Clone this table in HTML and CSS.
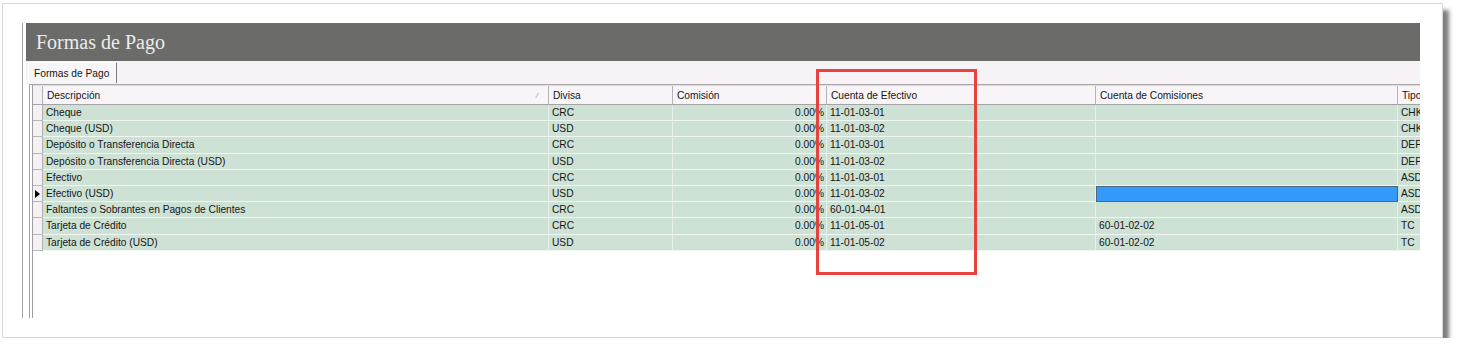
FILE: index.html
```html
<!DOCTYPE html>
<html lang="es">
<head>
<meta charset="utf-8">
<title>Formas de Pago</title>
<link rel="stylesheet" href="styles.css">
</head>
<body>
<div class="card">
  <div class="panel">
    <div class="titlebar">Formas de Pago</div>
    <div class="tabstrip"><div class="tab">Formas de Pago</div></div>
    <div class="gridwrap">
      <div class="grid">
        <div class="row head">
          <div class="ind"></div>
          <div class="hc desc"><span>Descripción</span><span class="sort">/</span></div>
          <div class="hc">Divisa</div>
          <div class="hc">Comisión</div>
          <div class="hc">Cuenta de Efectivo</div>
          <div class="hc">Cuenta de Comisiones</div>
          <div class="hc">Tipo</div>
        </div>
        <div class="row">
          <div class="ind"></div>
          <div class="c">Cheque</div><div class="c">CRC</div><div class="c num">0.00%</div><div class="c">11-01-03-01</div><div class="c"></div><div class="c">CHK</div>
        </div>
        <div class="row">
          <div class="ind"></div>
          <div class="c">Cheque (USD)</div><div class="c">USD</div><div class="c num">0.00%</div><div class="c">11-01-03-02</div><div class="c"></div><div class="c">CHK</div>
        </div>
        <div class="row">
          <div class="ind"></div>
          <div class="c">Depósito o Transferencia Directa</div><div class="c">CRC</div><div class="c num">0.00%</div><div class="c">11-01-03-01</div><div class="c"></div><div class="c">DEP</div>
        </div>
        <div class="row">
          <div class="ind"></div>
          <div class="c">Depósito o Transferencia Directa (USD)</div><div class="c">USD</div><div class="c num">0.00%</div><div class="c">11-01-03-02</div><div class="c"></div><div class="c">DEP</div>
        </div>
        <div class="row">
          <div class="ind"></div>
          <div class="c">Efectivo</div><div class="c">CRC</div><div class="c num">0.00%</div><div class="c">11-01-03-01</div><div class="c"></div><div class="c">ASD</div>
        </div>
        <div class="row">
          <div class="ind current"><svg width="5" height="8" viewBox="0 0 5 8"><polygon points="0,0 5,4 0,8" fill="#000"/></svg></div>
          <div class="c">Efectivo (USD)</div><div class="c">USD</div><div class="c num">0.00%</div><div class="c">11-01-03-02</div><div class="c selected"></div><div class="c">ASD</div>
        </div>
        <div class="row">
          <div class="ind"></div>
          <div class="c">Faltantes o Sobrantes en Pagos de Clientes</div><div class="c">CRC</div><div class="c num">0.00%</div><div class="c">60-01-04-01</div><div class="c"></div><div class="c">ASD</div>
        </div>
        <div class="row">
          <div class="ind"></div>
          <div class="c">Tarjeta de Crédito</div><div class="c">CRC</div><div class="c num">0.00%</div><div class="c">11-01-05-01</div><div class="c">60-01-02-02</div><div class="c">TC</div>
        </div>
        <div class="row">
          <div class="ind"></div>
          <div class="c">Tarjeta de Crédito (USD)</div><div class="c">USD</div><div class="c num">0.00%</div><div class="c">11-01-05-02</div><div class="c">60-01-02-02</div><div class="c">TC</div>
        </div>
      </div>
    </div>
  </div>
  <div class="highlight"></div>
</div>
</body>
</html>
```

FILE: styles.css
```css
* { box-sizing: border-box; }
html, body { margin: 0; padding: 0; background: #fff; }
body {
  padding: 3px 0 0 2px;
  font-family: "Liberation Sans", Arial, sans-serif;
  font-size: 10.2px;
  color: #151515;
}
.card {
  position: relative;
  width: 1441px;
  height: 335px;
  border: 1px solid #d8d8d8;
  background: #fff;
  box-shadow: 6px 7px 4px rgba(0, 0, 0, 0.5);
  padding: 19px 0 0 19px;
}
.panel {
  width: 1398px;
  height: 295px;
  border-left: 1px solid #a5a5a5;
  padding-left: 3px;
  overflow: hidden;
  display: flex;
  flex-direction: column;
}
.titlebar {
  flex: 0 0 38px;
  background: #6b6c69;
  color: #ececec;
  font-family: "Liberation Serif", "Times New Roman", serif;
  font-size: 20px;
  padding: 1px 0 0 10px;
  display: flex;
  align-items: center;
}
.tabstrip {
  flex: 0 0 23px;
  background: #f6f2f6;
  padding: 1px 0 0 2px;
  display: flex;
}
.tab {
  width: 89px;
  height: 21px;
  border-left: 1px solid #ffffff;
  border-top: 1px solid #ffffff;
  border-right: 1px solid #7c7c7c;
  padding-left: 5px;
  display: flex;
  align-items: center;
  background: #f8f5f8;
}
.gridwrap {
  flex: 1;
  margin-left: 3px;
  border-left: 1px solid #a0a0a0;
  border-top: 1px solid #a8a8a8;
  padding-left: 2px;
  background: #fff;
  display: flex;
}
.grid {
  flex: 1;
  border-left: 1px solid #a0a0a0;
}
.row {
  display: grid;
  grid-template-columns: 10px 506px 124px 154px 269px 302px 80px;
  height: 16.2px;
}
.row.head {
  height: 20px;
  border-top: 1px solid #dcdcdc;
  border-bottom: 1px solid #a4a4a4;
  background: #f8f4f8;
}
.hc {
  border-right: 1px solid #b4b4b4;
  padding-left: 4px;
  display: flex;
  align-items: center;
  white-space: nowrap;
  overflow: hidden;
}
.hc.desc { justify-content: space-between; padding-right: 10px; }
.sort { color: #9a9a9a; font-size: 8px; font-style: italic; }
.ind {
  background: #f4f0f4;
  border-right: 1px solid #b0b0b0;
  border-bottom: 1px solid #b8b8b8;
  display: flex;
  align-items: center;
  justify-content: center;
}
.row.head .ind { border-bottom: 0; }
.c {
  background: #cde1d5;
  border-right: 1px solid #e6efe9;
  border-bottom: 1px solid #f1f6f3;
  padding-left: 3px;
  display: flex;
  align-items: center;
  white-space: nowrap;
  overflow: hidden;
}
.c.num { justify-content: flex-end; padding-right: 2px; }
.c.selected {
  background: #3399fb;
  outline: 1px solid #4d6680;
  outline-offset: -1px;
}
.highlight {
  position: absolute;
  left: 813px;
  top: 65px;
  width: 161px;
  height: 206px;
  border: 3px solid #e8423e;
}
```
